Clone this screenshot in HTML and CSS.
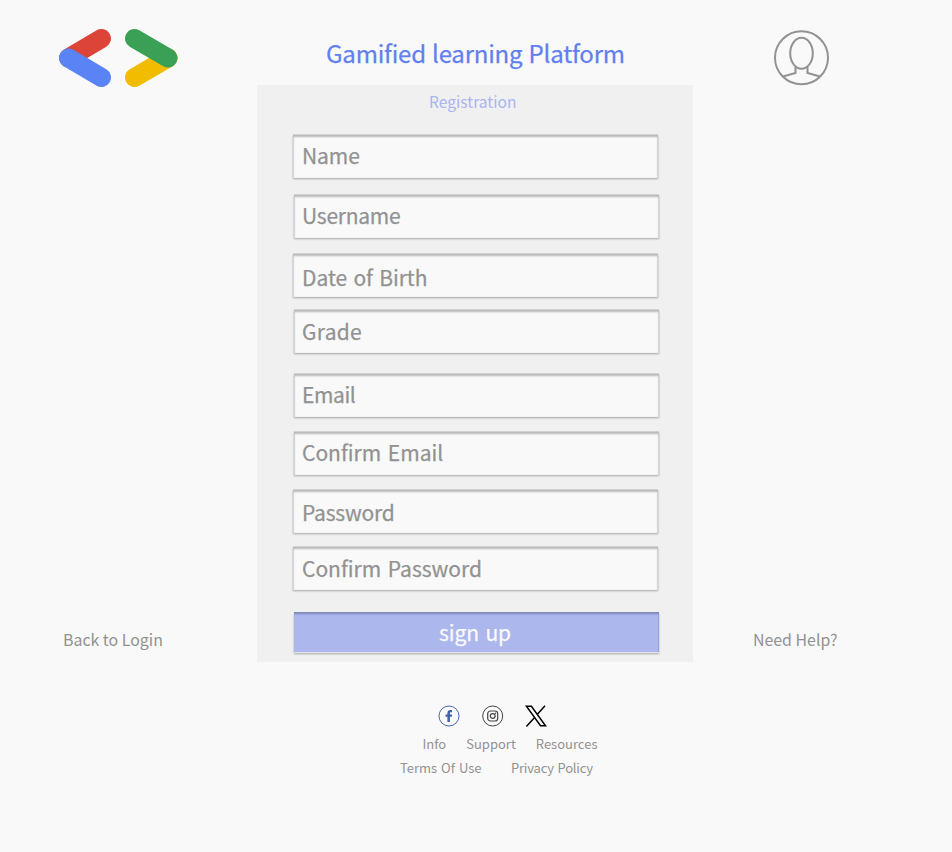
FILE: index.html
```html
<!DOCTYPE html>
<html lang="en">
<head>
<meta charset="utf-8">
<title>Gamified learning Platform</title>
<link rel="stylesheet" href="styles.css">
</head>
<body>
<header class="header">
  <svg class="logo" width="120" height="60" viewBox="0 0 120 60" fill="none" stroke-width="19" stroke-linecap="round">
    <path d="M43.500 10.500L10.500 30" stroke="#dd4438"/>
    <path d="M10.500 30L43.500 49.500" stroke="#5a83f5"/>
    <path d="M76.500 49.500L110 30" stroke="#f2bc00"/>
    <path d="M76.500 10.500L110 30" stroke="#3aa056"/>
  </svg>
  <h1 class="title">Gamified learning Platform</h1>
  <svg class="avatar" width="56" height="56" viewBox="0 0 56 56" fill="none" stroke="#929292" stroke-width="2">
    <circle cx="27.500" cy="27.700" r="26.500"/>
    <ellipse cx="27.500" cy="23.300" rx="11.300" ry="15.500"/>
    <path d="M21.500 37v6L9 46.500M33.500 37v6L46 46.500"/>
  </svg>
</header>
<main class="main">
  <a class="side back">Back to Login</a>
  <form class="panel">
    <h2 class="subtitle">Registration</h2>
    <div class="field name">Name</div>
    <div class="field username">Username</div>
    <div class="field birth">Date of Birth</div>
    <div class="field grade">Grade</div>
    <div class="field email">Email</div>
    <div class="field email-confirm">Confirm Email</div>
    <div class="field password">Password</div>
    <div class="field password-confirm">Confirm Password</div>
    <div class="signup">sign up</div>
  </form>
  <a class="side help">Need Help?</a>
</main>
<footer class="footer">
  <div class="social">
    <svg width="22" height="22" viewBox="0 0 22 22"><circle cx="11" cy="11" r="10" fill="none" stroke="#4a69ad"/><path d="M9.400 17v-5.200H7.600V9.500h1.800V8c0-2 1.200-3 2.900-3H14v2.200h-1c-.8 0-1.100.4-1.100 1.100v1.200h2.200l-.3 2.300h-1.900V17z" fill="#3f62a8"/></svg>
    <svg width="22" height="22" viewBox="0 0 22 22" fill="none" stroke="#444"><circle cx="10.700" cy="11" r="10"/><rect x="5.700" y="6" width="10" height="10" rx="2.800" stroke-width="1.200"/><circle cx="10.700" cy="11" r="2.400" stroke-width="1.200"/><circle cx="13.500" cy="8.200" r=".7" fill="#444" stroke="none"/></svg>
    <svg width="22" height="22" viewBox="0 0 22 22" fill="none" stroke="#000" stroke-width="1.500"><path d="M1.400 1.200h5L20.500 20.800h-5zM20 .7L12.200 9.600M9.600 12.400L1.400 21.400"/></svg>
  </div>
  <nav class="links first"><a>Info</a><a>Support</a><a>Resources</a></nav>
  <nav class="links second"><a>Terms Of Use</a><a>Privacy Policy</a></nav>
</footer>
</body>
</html>
```
FILE: styles.css
```css
* { box-sizing: border-box; }
body {
  margin: 0;
  width: 952px;
  height: 852px;
  overflow: hidden;
  background: #f9f9f9;
  color: #929292;
  font-family: "Noto Sans CJK KR", "Noto Sans", sans-serif;
  font-variant-ligatures: none;
}
h1, h2 { margin: 0; font-weight: 400; }
.title, .field, .signup { -webkit-text-stroke: 0.25px currentColor; }
.header {
  height: 85px;
  padding: 28px 122px 0 58px;
  display: flex;
  align-items: flex-start;
}
.logo { flex: none; }
.title {
  margin: 8px 0 0 148px;
  width: 448px;
  font-size: 24px;
  line-height: 34px;
  letter-spacing: -0.2px;
  word-spacing: 1px;
  color: #627fef;
}
.avatar { flex: none; margin-top: 2px; }
.main {
  height: 577px;
  display: grid;
  grid-template-columns: 257px 436px 1fr;
}
.panel {
  background: #f0f0f0;
  padding: 4px 34px 0 36px;
}
.subtitle {
  padding-left: 136px;
  font-size: 15.500px;
  line-height: 24px;
  letter-spacing: 0.050px;
  color: #a9b4f0;
}
.field, .signup {
  width: 365px;
  height: 43px;
  line-height: 41px;
  font-size: 21px;
  letter-spacing: -0.1px;
  word-spacing: 2px;
}
.field {
  padding-left: 9px;
  background: #f9f9f9;
  box-shadow: inset 0 2px 2px #b9b9b9, inset -1px 0 1px #dcdcdc, inset 1px 0 1px #dcdcdc, 0 -1px 0 #d2d2d2, 0 1px 2px #a6a6a6;
}
.name { margin-top: 22px; }
.username { margin: 17px 0 0 1px; padding-left: 8px; letter-spacing: -0.25px; }
.birth { margin-top: 16px; line-height: 46px; letter-spacing: 0; word-spacing: 1.500px; }
.grade { margin: 13px 0 0 1px; padding-left: 8px; line-height: 42px; letter-spacing: 0.300px; }
.email { margin: 21px 0 0 1px; padding-left: 8px; letter-spacing: -0.4px; }
.email-confirm { margin: 15px 0 0 1px; padding-left: 8px; letter-spacing: 0; }
.password { margin-top: 15px; line-height: 44px; letter-spacing: -0.2px; }
.password-confirm { margin-top: 14px; line-height: 42px; letter-spacing: 0; }
.signup {
  margin: 22px 0 0 1px;
  height: 40px;
  padding-right: 3px;
  text-align: center;
  color: #fafafa;
  background: #abb7ed;
  box-shadow: inset 0 3px 2px -1px #7f89b8, inset -1px 0 1px #9aa5d8, 0 1px 0 #e2e4ee, 0 2px 2px #a6a6a6;
}
.side { align-self: end; font-size: 15.900px; line-height: 24px; padding-bottom: 10px; }
.back { padding-left: 63px; }
.help { padding-left: 60px; }
.footer { padding-top: 43px; font-size: 13px; line-height: 24px; }
.social { display: flex; gap: 21.500px; padding-left: 438px; height: 27px; }
.links { display: flex; }
.first { padding-left: 422.500px; gap: 20px; }
.second { padding-left: 400px; gap: 29.500px; word-spacing: 1px; }
.second a + a { letter-spacing: -0.2px; }
```
